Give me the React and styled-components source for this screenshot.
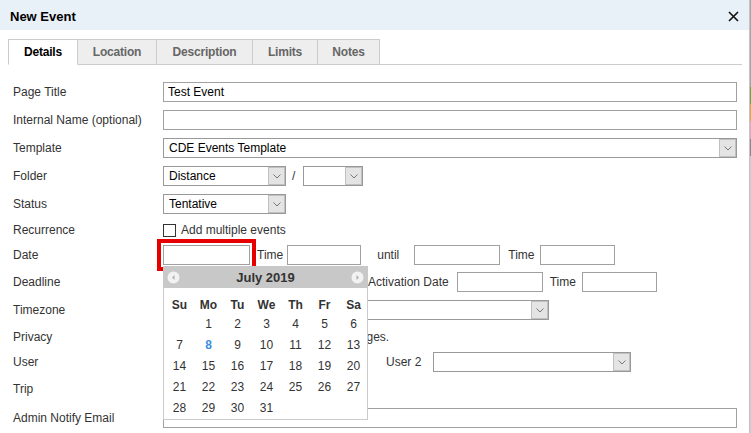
import React from 'react';
import styled, { createGlobalStyle } from 'styled-components';

const GlobalStyle = createGlobalStyle`
  html, body {
    margin: 0;
    padding: 0;
    background: #fff;
  }
  body {
    font-family: "Liberation Sans", Arial, sans-serif;
    font-size: 12px;
    color: #333;
  }
`

const tabs = [
  { name: 'Details', width: 70 },
  { name: 'Location', width: 79 },
  { name: 'Description', width: 96 },
  { name: 'Limits', width: 65 },
  { name: 'Notes', width: 62 },
]
const weekDays = ['Su', 'Mo', 'Tu', 'We', 'Th', 'Fr', 'Sa']
const july = [null, 1, 2, 3, 4, 5, 6, 7, 8, 9, 10, 11, 12, 13, 14, 15, 16, 17, 18, 19, 20,
  21, 22, 23, 24, 25, 26, 27, 28, 29, 30, 31]

const Chevron = () => (
  <svg width="8" height="5" viewBox="0 0 8 5">
    <path d="M0.5 0.5 L4 4 L7.5 0.5" fill="none" stroke="#777" strokeWidth="1" />
  </svg>
)

const Select = ({ width, gap, value }) => (
  <SelectBox width={width} gap={gap}>
    <SelectValue>{value}</SelectValue>
    <SelectButton><Chevron /></SelectButton>
  </SelectBox>
)

const NavButton = ({ dir }) => (
  <svg width="13" height="13" viewBox="0 0 13 13">
    <circle cx="6.5" cy="6.5" r="6" fill="#f2f2f2" />
    {dir === 'prev'
      ? <path d="M7.5 4 L5 6.5 L7.5 9 Z" fill="#b0b0b0" />
      : <path d="M5.5 4 L8 6.5 L5.5 9 Z" fill="#b0b0b0" />}
  </svg>
)

const Calendar = () => (
  <CalendarBox>
    <CalendarHead>
      <NavButton dir="prev" />
      <MonthTitle>July 2019</MonthTitle>
      <NavButton dir="next" />
    </CalendarHead>
    <CalendarBody>
      <DayGrid>
        {weekDays.map(d => <WeekDay key={d}>{d}</WeekDay>)}
      </DayGrid>
      <DayGrid>
        {july.map((d, i) => <Day key={i} today={d === 8}>{d}</Day>)}
      </DayGrid>
    </CalendarBody>
  </CalendarBox>
)

const App = () => {
  return (
    <Page>
      <GlobalStyle />
      <Dialog>
        <Header>
          <HeaderTitle>New Event</HeaderTitle>
          <svg width="11" height="11" viewBox="0 0 11 11">
            <path d="M1 1 L10 10 M10 1 L1 10" stroke="#111" strokeWidth="1.6" />
          </svg>
        </Header>
        <Body>
          <TabBar>
            {tabs.map((t, i) => <Tab key={t.name} width={t.width} active={i === 0}>{t.name}</Tab>)}
          </TabBar>
          <Form>
            <Row h={28}>
              <Label>Page Title</Label>
              <Input width={574} defaultValue="Test Event" />
            </Row>
            <Row h={28}>
              <Label>Internal Name (optional)</Label>
              <Input width={574} />
            </Row>
            <Row h={28}>
              <Label>Template</Label>
              <Select width={574} value="CDE Events Template" />
            </Row>
            <Row h={28}>
              <Label>Folder</Label>
              <Select width={123} value="Distance" />
              <Slash>/</Slash>
              <Select width={60} value="" />
            </Row>
            <Row h={28}>
              <Label>Status</Label>
              <Select width={123} value="Tentative" />
            </Row>
            <Row h={24}>
              <Label>Recurrence</Label>
              <Checkbox />
              <Text gap={5}>Add multiple events</Text>
            </Row>
            <Row h={26}>
              <Label>Date</Label>
              <Highlight>
                <Input width={87} />
                <Calendar />
              </Highlight>
              <Text gap={1}>Time</Text>
              <Input width={74} gap={4} />
              <Text gap={16}>until</Text>
              <Input width={86} gap={15} />
              <Text gap={8}>Time</Text>
              <Input width={75} gap={6} />
            </Row>
            <Row h={28}>
              <Label>Deadline</Label>
              <Input width={87} />
              <Input width={106} gap={6} />
              <Text gap={6}>Activation Date</Text>
              <Input width={86} gap={8} />
              <Text gap={7}>Time</Text>
              <Input width={75} gap={6} />
            </Row>
            <Row h={28}>
              <Label>Timezone</Label>
              <Select width={386} value="" />
            </Row>
            <Row h={26}>
              <Label>Privacy</Label>
              <Text>Private events are hidden on listing pages.</Text>
            </Row>
            <Row h={24}>
              <Label>User</Label>
              <Select width={200} value="" />
              <Text gap={23}>User 2</Text>
              <Select width={198} gap={12} value="" />
            </Row>
            <Row h={30}>
              <Label>Trip</Label>
              <Select width={200} value="" />
            </Row>
            <Row h={28}>
              <Label>Admin Notify Email</Label>
              <Input width={574} />
            </Row>
          </Form>
        </Body>
      </Dialog>
      <Backdrop />
    </Page>
  )
}

const Page = styled.div`
  display: flex;
  width: 751px;
  height: 433px;
  overflow: hidden;
`

const Dialog = styled.div`
  flex: 0 0 749px;
  border-right: 1px solid #c4c4c4;
  background: #fff;
`

const Backdrop = styled.div`
  flex: 1;
  background: linear-gradient(#9aa 0 20%, #6a3 20% 24%, #da3 24% 28%, #dab 28% 32%, #888 32% 36%, #ccc 36%);
`

const Header = styled.div`
  box-sizing: border-box;
  display: flex;
  align-items: center;
  justify-content: space-between;
  height: 30px;
  padding: 2px 10px 0 10px;
  background: #e8f0f8;
`

const HeaderTitle = styled.div`
  font-size: 13px;
  font-weight: bold;
  color: #000;
`

const Body = styled.div`
  padding: 9px 7px 0 8px;
`

const TabBar = styled.div`
  display: flex;
  height: 25px;
  border-bottom: 1px solid #ccc;
`

const Tab = styled.div`
  box-sizing: border-box;
  display: flex;
  align-items: center;
  justify-content: center;
  width: ${p => p.width}px;
  border: 1px solid #ccc;
  border-left: ${p => p.active ? '1px solid #ccc' : 'none'};
  border-bottom: ${p => p.active ? '1px solid #fff' : '1px solid #ccc'};
  margin-bottom: -1px;
  background: ${p => p.active ? '#fff' : '#eee'};
  color: ${p => p.active ? '#000' : '#666'};
  font-weight: bold;
  font-size: 12px;
  letter-spacing: -0.2px;
`

const Form = styled.div`
  display: flex;
  flex-direction: column;
  padding: 13px 0 0 5px;
`

const Row = styled.div`
  display: flex;
  align-items: center;
  height: ${p => p.h}px;
`

const Label = styled.div`
  flex: 0 0 150px;
  color: #333;
`

const Text = styled.span`
  margin-left: ${p => p.gap || 0}px;
  color: #333;
  white-space: nowrap;
`

const Slash = styled.span`
  margin: 0 8px 0 6px;
`

const Input = styled.input`
  box-sizing: border-box;
  width: ${p => p.width}px;
  height: 20px;
  margin: 0 0 0 ${p => p.gap || 0}px;
  padding: 0 4px;
  border: 1px solid #a0a0a0;
  border-radius: 0;
  font-family: "Liberation Sans", Arial, sans-serif;
  font-size: 12px;
  color: #000;
  outline: none;
`

const SelectBox = styled.div`
  box-sizing: border-box;
  display: flex;
  align-items: center;
  width: ${p => p.width}px;
  height: 20px;
  margin-left: ${p => p.gap || 0}px;
  border: 1px solid #999;
  background: #fff;
`

const SelectValue = styled.div`
  flex: 1;
  padding-left: 5px;
  color: #000;
  white-space: nowrap;
`

const SelectButton = styled.div`
  box-sizing: border-box;
  display: flex;
  align-items: center;
  justify-content: center;
  width: 17px;
  height: 18px;
  background: #e4e4e4;
  border: 1px solid #c0c0c0;
`

const Checkbox = styled.div`
  box-sizing: border-box;
  width: 13px;
  height: 13px;
  border: 1px solid #333;
  background: #fff;
`

const Highlight = styled.div`
  position: relative;
  display: flex;
  margin-left: -6px;
  padding: 2px;
  border: 4px solid #e60000;
`

const CalendarBox = styled.div`
  position: absolute;
  left: 2px;
  top: 23px;
  z-index: 10;
  width: 205px;
`

const CalendarHead = styled.div`
  display: flex;
  align-items: center;
  justify-content: space-between;
  height: 22px;
  padding: 0 4px;
  background: #c8c8c8;
`

const MonthTitle = styled.div`
  font-size: 13px;
  font-weight: bold;
  color: #333;
`

const CalendarBody = styled.div`
  padding: 8px 0 0 1px;
  height: 123px;
  background: #fff;
  border: 1px solid #ccc;
  border-top: none;
`

const DayGrid = styled.div`
  display: grid;
  grid-template-columns: repeat(7, 29px);
`

const WeekDay = styled.div`
  height: 18px;
  line-height: 18px;
  text-align: center;
  font-weight: bold;
  color: #333;
`

const Day = styled.div`
  height: 21px;
  line-height: 21px;
  text-align: center;
  color: ${p => p.today ? '#3b8ee0' : '#333'};
  font-weight: ${p => p.today ? 'bold' : 'normal'};
`

export default App;
